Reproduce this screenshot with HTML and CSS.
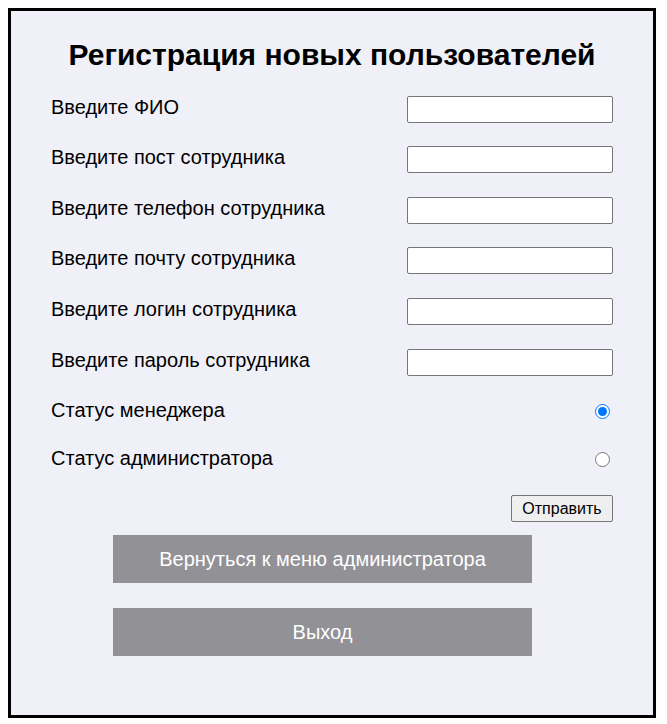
FILE: index.html
```html
<!DOCTYPE html>
<html lang="ru">
<head>
<meta charset="utf-8">
<title>Регистрация новых пользователей</title>
<link rel="stylesheet" href="styles.css">
</head>
<body>
<div class="page">
  <h1 class="title">Регистрация новых пользователей</h1>
  <form class="form">
    <div class="fields">
      <div class="row"><span class="label">Введите ФИО</span><input class="field" type="text"></div>
      <div class="row"><span class="label">Введите пост сотрудника</span><input class="field" type="text"></div>
      <div class="row"><span class="label">Введите телефон сотрудника</span><input class="field" type="text"></div>
      <div class="row"><span class="label">Введите почту сотрудника</span><input class="field" type="text"></div>
      <div class="row"><span class="label">Введите логин сотрудника</span><input class="field" type="text"></div>
      <div class="row"><span class="label">Введите пароль сотрудника</span><input class="field" type="password"></div>
    </div>
    <div class="statuses">
      <div class="radio-row"><span class="label">Статус менеджера</span><input class="radio" type="radio" name="role" checked></div>
      <div class="radio-row"><span class="label">Статус администратора</span><input class="radio" type="radio" name="role"></div>
    </div>
    <div class="submit-row"><button class="submit" type="button">Отправить</button></div>
  </form>
  <div class="nav">
    <button class="nav-btn" type="button">Вернуться к меню администратора</button>
    <button class="nav-btn" type="button">Выход</button>
  </div>
</div>
</body>
</html>
```
FILE: styles.css
```css
html, body {
  margin: 0;
  padding: 0;
  overflow: hidden;
}
body {
  padding: 8px 0 0 8px;
  font-family: "Liberation Sans", Arial, sans-serif;
  color: #000;
  background: #fff;
}
.page {
  box-sizing: border-box;
  width: 648px;
  height: 710px;
  border: 3px solid #000;
  background: #f0f0f8;
  padding: 26.6px 40px 0 40px;
}
.title {
  margin: 0;
  font-size: 30px;
  font-weight: bold;
  text-align: center;
  line-height: normal;
}
.form {
  margin: 24px 0 0 0;
}
.fields {
  display: flex;
  flex-direction: column;
  gap: 23.6px;
}
.row {
  display: flex;
  justify-content: space-between;
  align-items: center;
  height: 27px;
}
.label {
  font-size: 20px;
  line-height: 21px;
}
.row .label {
  margin-bottom: 4px;
}
.field {
  box-sizing: border-box;
  width: 206px;
  height: 27px;
  margin: 0;
  border: 1px solid #767676;
  border-radius: 2px;
  background: #fff;
  padding: 1px 4px;
  font-family: "Liberation Sans", Arial, sans-serif;
  font-size: 14px;
}
.statuses {
  margin-top: 24px;
  display: flex;
  flex-direction: column;
  gap: 24px;
}
.radio-row {
  display: flex;
  justify-content: space-between;
  align-items: flex-start;
  height: 24px;
}
.radio {
  width: 15px;
  height: 15px;
  margin: 4px 3px 0 0;
}
.submit-row {
  margin-top: 23.5px;
  display: flex;
  justify-content: flex-end;
}
.submit {
  box-sizing: border-box;
  height: 27px;
  width: 102px;
  padding: 0;
  font-family: "Liberation Sans", Arial, sans-serif;
  font-size: 16px;
  color: #000;
  background: #efefef;
  border: 1px solid #767676;
  border-radius: 2px;
}
.nav {
  margin: 13px 0 0 62px;
  display: flex;
  flex-direction: column;
  gap: 25px;
  width: 419px;
}
.nav-btn {
  height: 48px;
  border: none;
  margin: 0;
  padding: 0;
  background: #929196;
  color: #fff;
  font-family: "Liberation Sans", Arial, sans-serif;
  font-size: 20px;
}
```
